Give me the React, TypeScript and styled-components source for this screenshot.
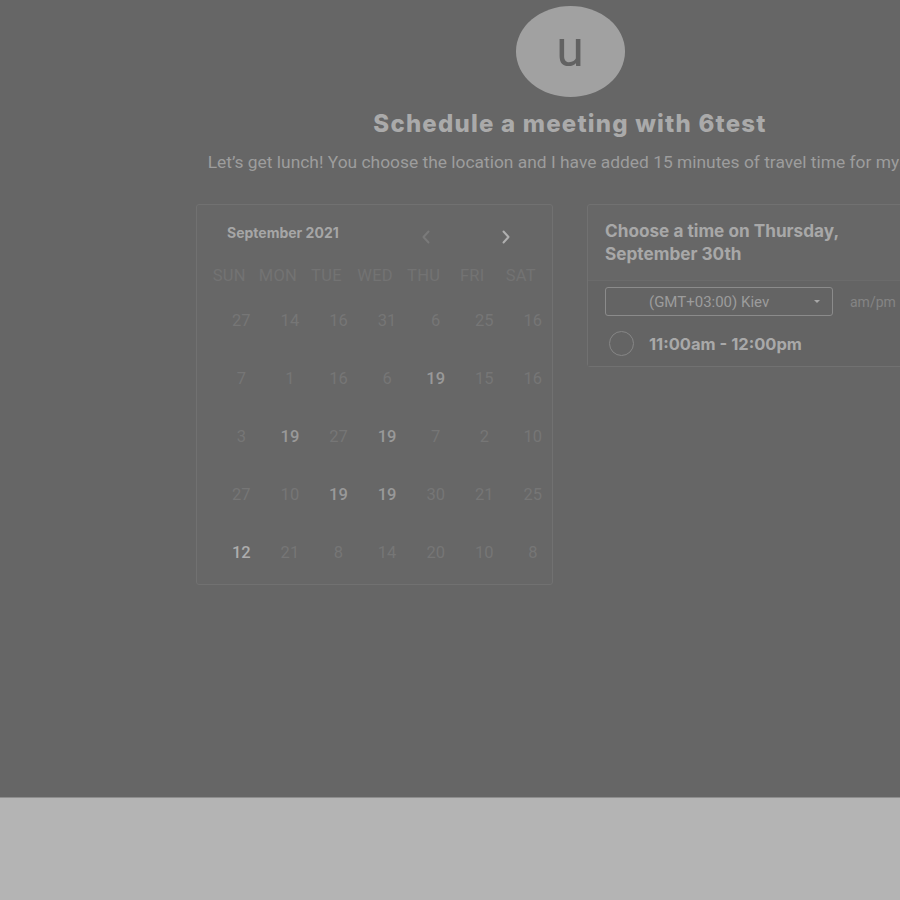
import React from "react";
import styled, { createGlobalStyle } from "styled-components";

const Global = createGlobalStyle`
  html, body { margin: 0; padding: 0; background: #666666; }
  body { width: 900px; height: 900px; overflow: hidden; }
  #root { width: 900px; height: 900px; overflow: hidden; }
`;

const Shell = styled.div`
  width: 900px;
  height: 900px;
  display: flex;
  flex-direction: column;
  overflow: hidden;
`;

const Main = styled.main`
  height: 797px;
  width: 1140px;
  flex: none;
  background: #666666;
  display: flex;
  flex-direction: column;
  align-items: center;
  padding-top: 6px;
  box-sizing: border-box;
`;

const Footer = styled.footer`
  flex: 1;
  background: #b4b4b4;
  border-top: 1px solid #8e8e8e;
`;

const Avatar = styled.div`
  width: 109px;
  height: 91px;
  border-radius: 50%;
  background: #a1a1a1;
  display: flex;
  align-items: center;
  justify-content: center;
  color: #626262;
  font-family: "Roboto", "Liberation Sans", sans-serif;
  font-size: 50px;
  font-weight: 400;
  line-height: 1;
  padding-bottom: 6px;
  box-sizing: border-box;
`;

const Title = styled.h1`
  margin: 12px 0 0;
  font-family: "Inter", "Liberation Sans", sans-serif;
  font-weight: 800;
  font-size: 24px;
  line-height: 30px;
  color: #aaaaaa;
  letter-spacing: 1.2px;
`;

const Subtitle = styled.p`
  margin: 12px 0 0;
  font-family: "Roboto", "Liberation Sans", sans-serif;
  font-size: 17.4px;
  line-height: 22px;
  color: #9d9d9d;
  white-space: nowrap;
`;

const Row = styled.div`
  margin-top: 31px;
  display: flex;
  gap: 34px;
  align-items: flex-start;
`;

const Card = styled.section`
  width: 357px;
  box-sizing: border-box;
  border: 1px solid #717171;
  border-radius: 3px;
  background: #676767;
`;

const Calendar = styled(Card)`
  height: 381px;
  padding: 18px 8px 0 8px;
`;

const CalHeader = styled.div`
  display: flex;
  align-items: center;
  height: 18px;
  padding-left: 22px;
`;

const Month = styled.div`
  font-family: "Inter", "Liberation Sans", sans-serif;
  font-weight: 700;
  font-size: 14px;
  color: #a6a6a6;
  width: 192px;
`;

const Nav = styled.button<{ $bright?: boolean }>`
  background: none;
  border: 0;
  padding: 0;
  width: 14px;
  height: 18px;
  margin-top: 10px;
  display: flex;
  align-items: center;
  justify-content: center;
  color: ${(p) => (p.$bright ? "#b0b0b0" : "#7a7a7a")};
  & + & { margin-left: 66px; }
`;

const Grid = styled.div<{ $pad: number }>`
  display: grid;
  grid-template-columns: repeat(7, 48.6px);
  padding-left: ${(p) => p.$pad}px;
`;

const Head = styled.div`
  height: 36px;
  margin-top: 16px;
  display: flex;
  align-items: center;
  justify-content: center;
  font-family: "Roboto", "Liberation Sans", sans-serif;
  font-size: 16.5px;
  color: #737373;
  letter-spacing: 0.3px;
`;

const DateCell = styled.div<{ $tone: 0 | 1 | 2 }>`
  height: 58px;
  display: flex;
  align-items: center;
  justify-content: center;
  font-family: "Roboto", "Liberation Sans", sans-serif;
  font-size: 16.5px;
  font-weight: ${(p) => (p.$tone === 0 ? 400 : 500)};
  color: ${(p) => (p.$tone === 0 ? "#767676" : p.$tone === 1 ? "#999999" : "#adadad")};
`;

const Dates = styled(Grid)`
  margin-top: -2px;
`;

const Times = styled(Card)`
  height: 163px;
  display: flex;
  flex-direction: column;
`;

const TimesHead = styled.div`
  padding: 14px 17px 0;
  height: 76px;
  box-sizing: border-box;
  border-bottom: 1px solid #6b6b6b;
  font-family: "Inter", "Liberation Sans", sans-serif;
  font-weight: 700;
  font-size: 17.2px;
  line-height: 23px;
  color: #a8a8a8;
`;

const TimesBody = styled.div`
  background: #646464;
  flex: 1;
  padding: 6px 17px 0;
`;

const Controls = styled.div`
  display: flex;
  align-items: center;
  gap: 17px;
`;

const Select = styled.div`
  width: 228px;
  height: 29px;
  box-sizing: border-box;
  border: 1px solid #8b8b8b;
  border-radius: 3px;
  display: flex;
  align-items: center;
  padding: 0 12px 0 43px;
  font-family: "Roboto", "Liberation Sans", sans-serif;
  font-size: 15px;
  color: #9c9c9c;
`;

const SelectText = styled.span`
  flex: 1;
`;

const Caret = styled.span`
  width: 0;
  height: 0;
  border-left: 3.5px solid transparent;
  border-right: 3.5px solid transparent;
  border-top: 3.5px solid #a8a8a8;
`;

const Ampm = styled.span`
  font-family: "Roboto", "Liberation Sans", sans-serif;
  font-size: 14px;
  color: #848484;
`;

const Slot = styled.div`
  display: flex;
  align-items: center;
  gap: 15px;
  margin-top: 15px;
  padding-left: 4px;
`;

const Radio = styled.span`
  width: 25px;
  height: 25px;
  border-radius: 50%;
  border: 1.5px solid #868686;
  box-sizing: border-box;
`;

const SlotText = styled.span`
  font-family: "Inter", "Liberation Sans", sans-serif;
  font-weight: 700;
  font-size: 16.5px;
  color: #a9a9a9;
`;

const days = ["SUN", "MON", "TUE", "WED", "THU", "FRI", "SAT"];
const rows: [number, 0 | 1 | 2][][] = [
  [[27, 0], [14, 0], [16, 0], [31, 0], [6, 0], [25, 0], [16, 0]],
  [[7, 0], [1, 0], [16, 0], [6, 0], [19, 1], [15, 0], [16, 0]],
  [[3, 0], [19, 1], [27, 0], [19, 1], [7, 0], [2, 0], [10, 0]],
  [[27, 0], [10, 0], [19, 1], [19, 1], [30, 0], [21, 0], [25, 0]],
  [[12, 2], [21, 0], [8, 0], [14, 0], [20, 0], [10, 0], [8, 0]],
];

const Chevron = ({ left }: { left?: boolean }) => (
  <svg width="10" height="14" viewBox="0 0 10 14" fill="none">
    <path
      d={left ? "M7.5 1.5 L2.5 7 L7.5 12.5" : "M2.5 1.5 L7.5 7 L2.5 12.5"}
      stroke="currentColor"
      strokeWidth="2"
      strokeLinecap="round"
      strokeLinejoin="round"
    />
  </svg>
);

export default function App() {
  return (
    <Shell>
      <Global />
      <Main>
        <Avatar>u</Avatar>
        <Title>Schedule a meeting with 6test</Title>
        <Subtitle>
          Let’s get lunch! You choose the location and I have added 15 minutes of travel time for myself.
        </Subtitle>
        <Row>
          <Calendar>
            <CalHeader>
              <Month>September 2021</Month>
              <Nav aria-label="previous month">
                <Chevron left />
              </Nav>
              <Nav $bright aria-label="next month">
                <Chevron />
              </Nav>
            </CalHeader>
            <Grid $pad={0}>
              {days.map((d) => (
                <Head key={d}>{d}</Head>
              ))}
            </Grid>
            <Dates $pad={12}>
              {rows.flat().map(([n, t], i) => (
                <DateCell key={i} $tone={t}>
                  {n}
                </DateCell>
              ))}
            </Dates>
          </Calendar>
          <Times>
            <TimesHead>
              Choose a time on Thursday,
              <br />
              September 30th
            </TimesHead>
            <TimesBody>
              <Controls>
                <Select>
                  <SelectText>(GMT+03:00) Kiev</SelectText>
                  <Caret />
                </Select>
                <Ampm>am/pm</Ampm>
              </Controls>
              <Slot>
                <Radio />
                <SlotText>11:00am - 12:00pm</SlotText>
              </Slot>
            </TimesBody>
          </Times>
        </Row>
      </Main>
      <Footer />
    </Shell>
  );
}
